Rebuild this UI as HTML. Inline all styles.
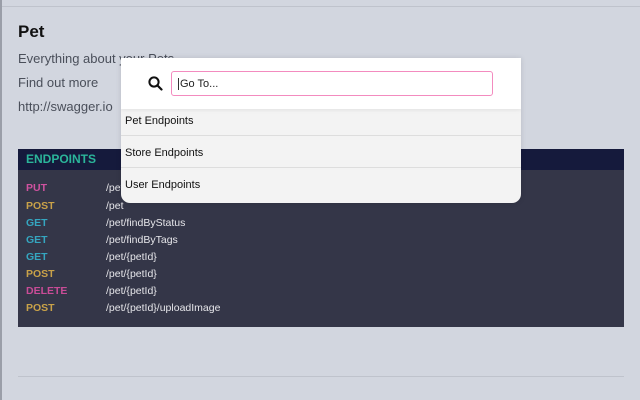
<!DOCTYPE html>
<html><head><style>
body{margin:0;width:640px;height:400px;background:#d2d6df;font-family:"Liberation Sans",Arial,sans-serif;position:relative;overflow:hidden}
.abs{position:absolute}
.t{color:#4a4f5a;font-size:13px}
.ep{left:18px;top:149px;width:606px;height:178px;background:#343648}
.eph{left:18px;top:149px;width:606px;height:21px;background:#151a3c;color:#2bb59a;font-weight:bold;font-size:12px;line-height:21px;padding-left:8px;box-sizing:border-box}
.row{position:absolute;left:26px;font-size:10.5px;font-weight:bold}
.p{position:absolute;left:106px;font-size:10.5px;color:#e6e6ea}
.put{color:#d052a0}.post{color:#c9a249}.get{color:#35a6c0}.del{color:#c94c97}
.panel{left:121px;top:58px;width:400px;height:145px;background:#f3f3f3;border-radius:0 0 9px 9px;overflow:hidden;box-shadow:0 0 6px rgba(0,0,0,.12)}
.hd{position:absolute;left:0;top:0;width:400px;height:51px;background:#fff;box-shadow:0 1px 4px rgba(0,0,0,.08)}
.inp{position:absolute;left:50px;top:13px;width:322px;height:25px;border:1.5px solid #f38bbf;border-radius:3px;box-sizing:border-box;font-size:11px;line-height:25px;padding-left:6px;color:#222}
.it{position:absolute;left:4px;font-size:11px;color:#111}
.ln{position:absolute;left:0;width:400px;height:1px;background:#ddd}
</style></head><body>
<div class="abs" style="left:0;top:6px;width:640px;height:1px;background:#bfc3cc"></div>
<div class="abs" style="left:0;top:0;width:2px;height:400px;background:#9a9ea8"></div>
<div class="abs" style="left:18px;top:22px;font-size:17px;font-weight:bold;color:#111">Pet</div>
<div class="abs t" style="left:18px;top:51px">Everything about your Pets</div>
<div class="abs t" style="left:18px;top:75px">Find out more</div>
<div class="abs t" style="left:18px;top:99px">http://swagger.io</div>
<div class="abs ep"></div>
<div class="abs eph">ENDPOINTS</div>
<div class="row put" style="top:182px">PUT</div><div class="p" style="top:182px">/pet</div>
<div class="row post" style="top:200px">POST</div><div class="p" style="top:200px">/pet</div>
<div class="row get" style="top:217px">GET</div><div class="p" style="top:217px">/pet/findByStatus</div>
<div class="row get" style="top:234px">GET</div><div class="p" style="top:234px">/pet/findByTags</div>
<div class="row get" style="top:251px">GET</div><div class="p" style="top:251px">/pet/{petId}</div>
<div class="row post" style="top:268px">POST</div><div class="p" style="top:268px">/pet/{petId}</div>
<div class="row del" style="top:285px">DELETE</div><div class="p" style="top:285px">/pet/{petId}</div>
<div class="row post" style="top:302px">POST</div><div class="p" style="top:302px">/pet/{petId}/uploadImage</div>
<div class="abs" style="left:18px;top:376px;width:606px;height:1px;background:#bfc3cc"></div>
<div class="abs panel">
<div class="hd">
<svg style="position:absolute;left:27px;top:18px" width="15" height="15" viewBox="0 0 15 15"><circle cx="6" cy="6" r="4.6" fill="none" stroke="#111" stroke-width="2"/><line x1="9.5" y1="9.5" x2="13.5" y2="13.5" stroke="#111" stroke-width="2.2" stroke-linecap="round"/></svg>
<div class="inp"><span style="border-left:1px solid #333;padding-left:1px">Go To...</span></div>
</div>
<div class="it" style="top:57px">Pet Endpoints</div>
<div class="ln" style="top:77px"></div>
<div class="it" style="top:89px">Store Endpoints</div>
<div class="ln" style="top:109px"></div>
<div class="it" style="top:121px">User Endpoints</div>
</div>
</body></html>
